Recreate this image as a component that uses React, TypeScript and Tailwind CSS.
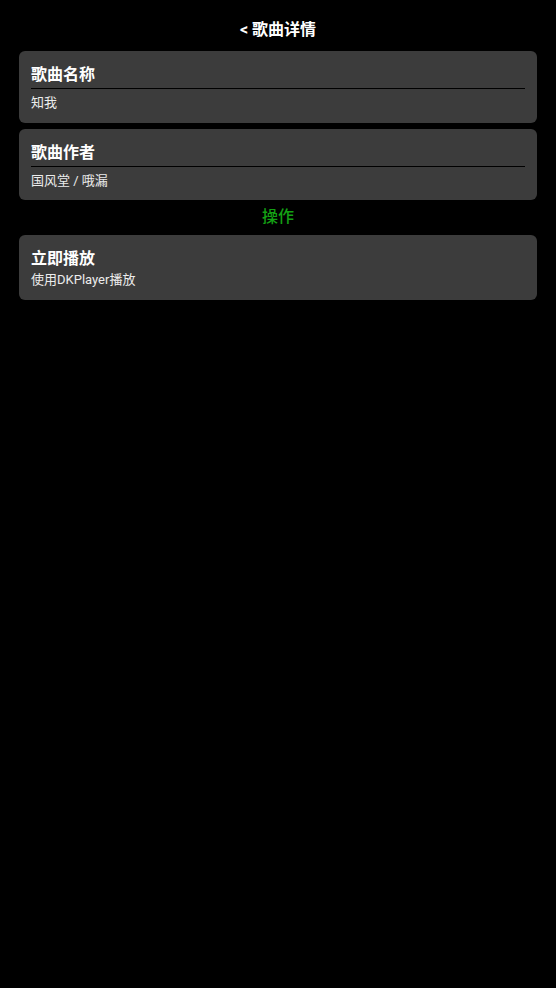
export default function App() {
  const fields = [
    { label: "歌曲名称", value: "知我" },
    { label: "歌曲作者", value: "国风堂 / 哦漏" },
  ];

  return (
    <div
      className="min-h-[988px] bg-black px-[19px] text-white"
      style={{ fontFamily: 'Roboto, "Noto Sans CJK SC", sans-serif' }}
    >
      {/* Header */}
      <div className="pt-[19px] mb-[10px] text-center text-base font-bold leading-[22px]">
        &lt; 歌曲详情
      </div>

      <div className="flex flex-col gap-[6px]">
        {fields.map((f) => (
          <div key={f.label} className="rounded-[6px] bg-[#3c3c3c] px-[12px] pt-[13px] pb-[9.5px]">
            <div className="border-b border-black pb-[2px] text-base font-bold leading-[22px]">
              {f.label}
            </div>
            <div className="mt-[4px] text-[13px] leading-[20px] text-[#ececec]">{f.value}</div>
          </div>
        ))}
      </div>

      <div className="mt-[6px] mb-[7px] text-center text-base font-medium leading-[22px] text-[#14a014]">
        操作
      </div>

      {/* Action */}
      <div className="rounded-[6px] bg-[#3c3c3c] px-[12px] pt-[13px] pb-[10px]">
        <div className="text-base font-bold leading-[22px]">立即播放</div>
        <div className="text-[13px] leading-[20px] text-[#ececec]">使用DKPlayer播放</div>
      </div>
    </div>
  );
}
